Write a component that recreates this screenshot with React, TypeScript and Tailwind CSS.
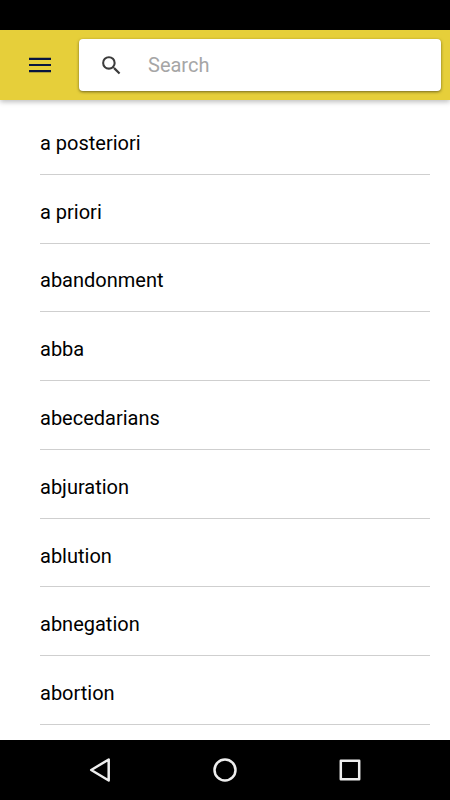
const words = [
  'a posteriori',
  'a priori',
  'abandonment',
  'abba',
  'abecedarians',
  'abjuration',
  'ablution',
  'abnegation',
  'abortion',
];

export default function App() {
  return (
    <div className="flex min-h-screen flex-col bg-white font-[Roboto,sans-serif] text-xl text-black">
      <div className="h-[30px] shrink-0 bg-black" />
      <header className="flex h-[70px] shrink-0 items-center bg-[#e6cf3a] pr-[9px] shadow-[0_2px_5px_rgba(0,0,0,0.26)]">
        <button type="button" aria-label="Menu" className="flex w-[79px] shrink-0 justify-center">
          <svg width="24" height="18" viewBox="0 0 24 18" fill="#08153f" aria-hidden="true">
            <path d="M1 1.700h22V4H1zM1 7.900h22v2.200H1zM1 13.900h22v2.300H1z" />
          </svg>
        </button>
        <label className="flex h-[52px] min-w-0 flex-1 items-center rounded-sm bg-white shadow-[0_1px_3px_rgba(0,0,0,0.5)]">
          <svg className="ml-5 shrink-0" width="25" height="25" viewBox="0 0 24 24" fill="#3c3c3c" aria-hidden="true">
            <path d="M15.5 14h-.79l-.28-.27A6.47 6.47 0 0 0 16 9.5 6.5 6.5 0 1 0 9.5 16c1.61 0 3.09-.59 4.23-1.57l.27.28v.79l5 4.99L20.49 19zm-6 0C7.01 14 5 11.99 5 9.500S7.01 5 9.500 5 14 7.010 14 9.500 11.990 14 9.500 14" />
          </svg>
          <input
            type="search"
            aria-label="Search"
            placeholder="Search"
            className="ml-6 min-w-0 flex-1 bg-transparent outline-none placeholder:text-[#a6a6a6]"
          />
        </label>
      </header>
      <ul className="flex flex-1 flex-col pt-1.5 pr-5 pb-[15px] pl-10">
        {words.map((word) => (
          <li key={word} className="flex flex-1 items-center border-b border-[#cfcfcf] pt-1.5">
            {word}
          </li>
        ))}
      </ul>
      <nav aria-label="System" className="flex h-[60px] shrink-0 items-center justify-center gap-[97px] bg-black">
        <button type="button" aria-label="Back">
          <svg width="28" height="28" viewBox="0 0 28 28" fill="none" stroke="#eee" strokeWidth="2.5" strokeLinejoin="round" aria-hidden="true">
            <path d="M22.700 3.500V24.500L5.200 14z" />
          </svg>
        </button>
        <button type="button" aria-label="Home">
          <svg width="28" height="28" viewBox="0 0 28 28" fill="none" stroke="#eee" strokeWidth="2.5" aria-hidden="true">
            <circle cx="14" cy="14" r="10.500" />
          </svg>
        </button>
        <button type="button" aria-label="Recent apps">
          <svg width="28" height="28" viewBox="0 0 28 28" fill="none" stroke="#eee" strokeWidth="2.500" strokeLinejoin="round" aria-hidden="true">
            <path d="M4.800 4.800h18.400v18.400H4.800z" />
          </svg>
        </button>
      </nav>
    </div>
  );
}
